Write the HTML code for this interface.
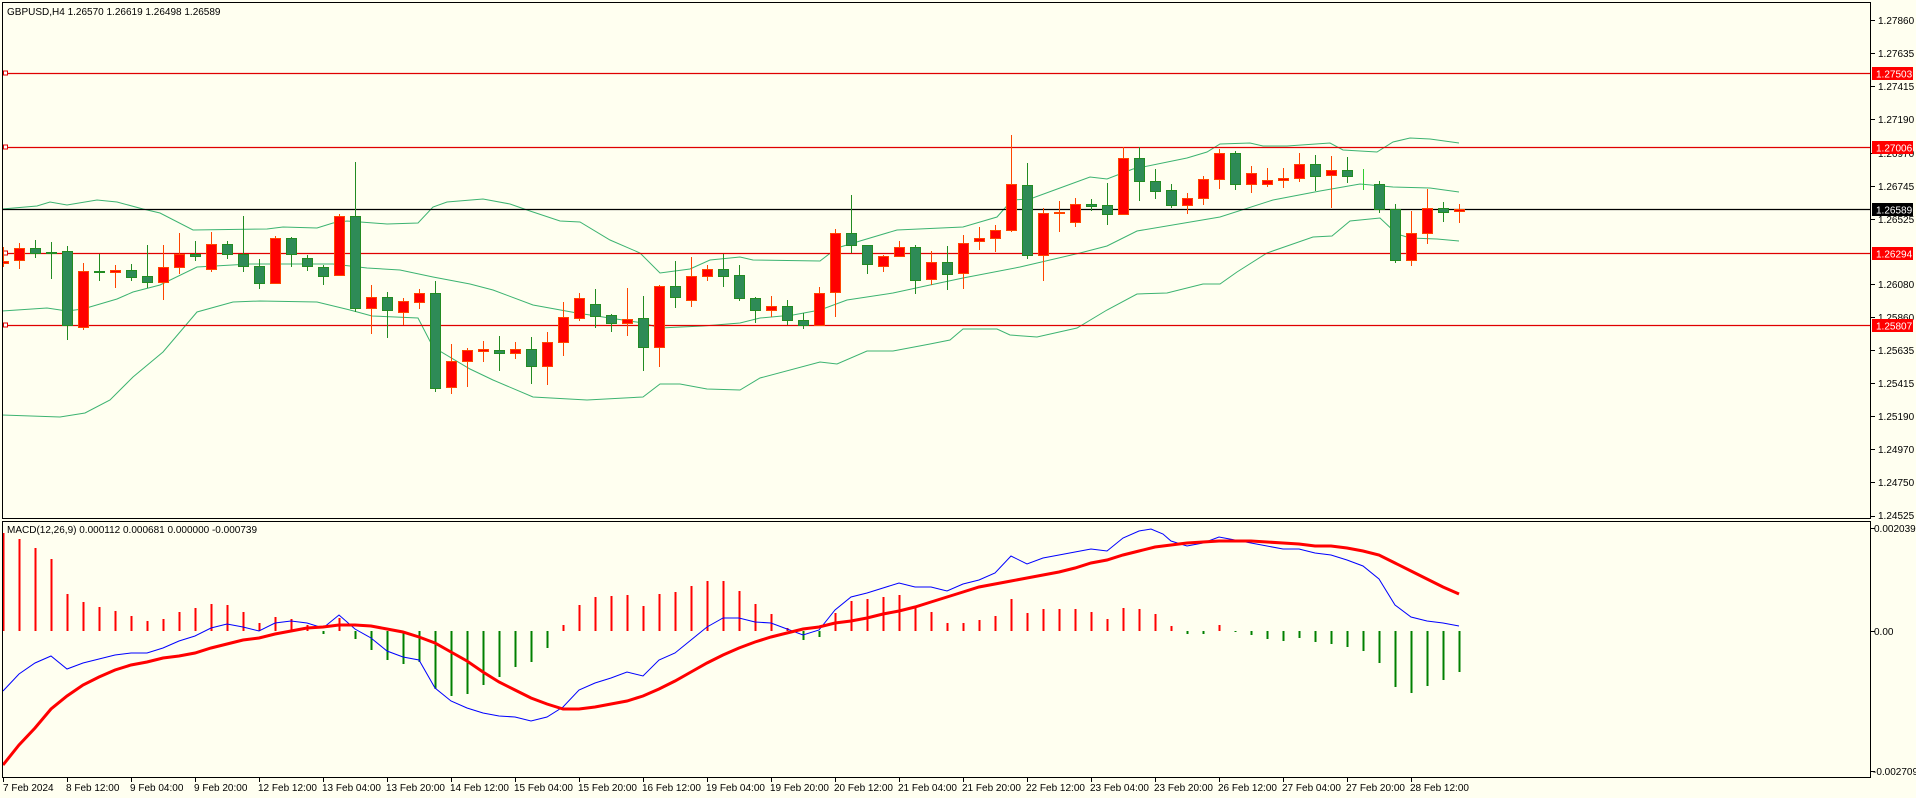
<!DOCTYPE html>
<html><head><meta charset="utf-8"><style>
html,body{margin:0;padding:0;background:#fffff0;}
svg{display:block;font-family:"Liberation Sans",sans-serif;}
.g path,.g rect{stroke:#228b22;fill:#2e8b57}
.r path,.r rect{stroke:#ff4500;fill:#ff0000}
text{font-size:10px;fill:#000}
</style></head><body>
<svg width="1916" height="798" viewBox="0 0 1916 798" xmlns="http://www.w3.org/2000/svg">
<rect x="0" y="0" width="1916" height="798" fill="#fffff0"/>
<defs><clipPath id="cm"><rect x="2" y="2" width="1868" height="516"/></clipPath>
<clipPath id="cd"><rect x="2" y="521" width="1868" height="256"/></clipPath></defs>

<g clip-path="url(#cm)">
<!-- bollinger -->
<g fill="none" stroke="#3cb371" stroke-width="1">
<polyline points="2,209 37,206 50,202 67,205 97,200 117,202 143,209 160,213 193,230 267,229 283,227 317,228 333,223 347,221 387,224 418,223 433,207 447,202 483,199 510,204 530,211 560,221 580,222 610,240 640,253 660,273 690,269 710,260 740,257 753,260 820,261 837,248 860,241 897,230 963,227 997,217 1012,200 1030,199 1060,188 1090,177 1107,179 1133,169 1187,158 1207,152 1220,144 1250,143 1263,146 1287,146 1330,143 1343,150 1377,152 1393,142 1410,138 1430,139 1459,143"/>
<polyline points="2,311 47,308 67,311 83,309 117,299 133,292 160,285 197,267 250,264 333,264 367,268 400,270 433,277 470,284 493,290 533,305 577,313 603,317 643,323 660,328 703,326 740,323 760,318 793,315 820,310 847,300 893,293 930,285 963,278 1020,267 1080,253 1107,246 1137,231 1220,217 1273,200 1320,191 1360,184 1393,187 1430,188 1459,192"/>
<polyline points="2,415 60,417 85,413 110,400 133,377 163,352 197,312 233,302 260,301 317,302 350,310 372,316 418,318 433,347 470,369 493,380 533,397 587,400 643,397 660,384 680,384 707,389 740,390 760,378 820,362 837,364 867,351 893,351 930,344 950,340 963,329 997,329 1010,335 1037,337 1077,328 1107,310 1137,294 1167,293 1203,284 1220,284 1237,272 1267,253 1313,237 1332,236 1350,221 1380,218 1397,234 1410,238 1437,239 1459,241"/>
</g>
<!-- horizontal lines -->
<g stroke="#e00000" stroke-width="1.2">
<line x1="2" y1="73.5" x2="1870" y2="73.5"/>
<line x1="2" y1="147.5" x2="1870" y2="147.5"/>
<line x1="2" y1="253.5" x2="1870" y2="253.5"/>
<line x1="2" y1="325.5" x2="1870" y2="325.5"/>
</g>
<line x1="2" y1="209.5" x2="1870" y2="209.5" stroke="#000" stroke-width="1.2"/>
<g fill="#fff" stroke="#e00000"><rect x="3.5" y="71" width="4" height="4"/><rect x="3.5" y="145" width="4" height="4"/><rect x="3.5" y="251" width="4" height="4"/><rect x="3.5" y="323" width="4" height="4"/></g>

<!-- green candles -->
<g class="g" stroke-width="1">
<path d="M35.5 240V258"/><rect x="30.5" y="248.5" width="10" height="5"/>
<path d="M51.5 242V279"/><rect x="46.5" y="252.5" width="10" height="1"/>
<path d="M67.5 246V340"/><rect x="62.5" y="251.5" width="10" height="74"/>
<path d="M99.5 254V281"/><rect x="94.5" y="271.5" width="10" height="1"/>
<path d="M131.5 264V281"/><rect x="126.5" y="270.5" width="10" height="7"/>
<path d="M147.5 245V288"/><rect x="142.5" y="276.5" width="10" height="6"/>
<path d="M195.5 241V261"/><rect x="190.5" y="254.5" width="10" height="2"/>
<path d="M227.5 241V259"/><rect x="222.5" y="244.5" width="10" height="10"/>
<path d="M243.5 216V272"/><rect x="238.5" y="254.5" width="10" height="12"/>
<path d="M259.5 259V289"/><rect x="254.5" y="266.5" width="10" height="17"/>
<path d="M291.5 237V267"/><rect x="286.5" y="238.5" width="10" height="16"/>
<path d="M307.5 255V271"/><rect x="302.5" y="258.5" width="10" height="8"/>
<path d="M323.5 265V285"/><rect x="318.5" y="267.5" width="10" height="9"/>
<path d="M355.5 162V312"/><rect x="350.5" y="216.5" width="10" height="92"/>
<path d="M387.5 292V338"/><rect x="382.5" y="297.5" width="10" height="13"/>
<path d="M435.5 281V392"/><rect x="430.5" y="293.5" width="10" height="95"/>
<path d="M499.5 336V371"/><rect x="494.5" y="350.5" width="10" height="3"/>
<path d="M531.5 337V384"/><rect x="526.5" y="349.5" width="10" height="17"/>
<path d="M595.5 289V328"/><rect x="590.5" y="304.5" width="10" height="12"/>
<path d="M611.5 314V332"/><rect x="606.5" y="315.5" width="10" height="8"/>
<path d="M643.5 296V371"/><rect x="638.5" y="318.5" width="10" height="29"/>
<path d="M675.5 261V308"/><rect x="670.5" y="286.5" width="10" height="11"/>
<path d="M723.5 254V287"/><rect x="718.5" y="269.5" width="10" height="7"/>
<path d="M739.5 265V301"/><rect x="734.5" y="275.5" width="10" height="23"/>
<path d="M755.5 297V323"/><rect x="750.5" y="298.5" width="10" height="12"/>
<path d="M787.5 300V325"/><rect x="782.5" y="306.5" width="10" height="14"/>
<path d="M803.5 313V329"/><rect x="798.5" y="320.5" width="10" height="5"/>
<path d="M851.5 195V253"/><rect x="846.5" y="233.5" width="10" height="12"/>
<path d="M867.5 245V274"/><rect x="862.5" y="245.5" width="10" height="19"/>
<path d="M915.5 245V294"/><rect x="910.5" y="247.5" width="10" height="33"/>
<path d="M947.5 246V290"/><rect x="942.5" y="262.5" width="10" height="12"/>
<path d="M1027.5 163V259"/><rect x="1022.5" y="185.5" width="10" height="70"/>
<path d="M1091.5 199V211"/><rect x="1086.5" y="204.5" width="10" height="2"/>
<path d="M1107.5 183V225"/><rect x="1102.5" y="205.5" width="10" height="9"/>
<path d="M1139.5 147V201"/><rect x="1134.5" y="158.5" width="10" height="23"/>
<path d="M1155.5 169V199"/><rect x="1150.5" y="181.5" width="10" height="10"/>
<path d="M1171.5 184V208"/><rect x="1166.5" y="190.5" width="10" height="15"/>
<path d="M1235.5 151V190"/><rect x="1230.5" y="153.5" width="10" height="31"/>
<path d="M1315.5 155V191"/><rect x="1310.5" y="164.5" width="10" height="12"/>
<path d="M1347.5 157V183"/><rect x="1342.5" y="170.5" width="10" height="6"/>
<path d="M1379.5 181V213"/><rect x="1374.5" y="184.5" width="10" height="25"/>
<path d="M1395.5 204V263"/><rect x="1390.5" y="209.5" width="10" height="51"/>
<path d="M1443.5 202V222"/><rect x="1438.5" y="208.5" width="10" height="4"/>
</g>
<path d="M1363.5 169V190" stroke="#32cd32" stroke-width="1"/>
<!-- red candles -->
<g class="r" stroke-width="1">
<path d="M3.5 247V267"/><rect x="-1.5" y="261.5" width="10" height="2"/>
<path d="M19.5 243V269"/><rect x="14.5" y="248.5" width="10" height="12"/>
<path d="M83.5 263V330"/><rect x="78.5" y="271.5" width="10" height="56"/>
<path d="M115.5 265V288"/><rect x="110.5" y="270.5" width="10" height="2"/>
<path d="M163.5 245V300"/><rect x="158.5" y="267.5" width="10" height="15"/>
<path d="M179.5 233V274"/><rect x="174.5" y="254.5" width="10" height="13"/>
<path d="M211.5 232V272"/><rect x="206.5" y="244.5" width="10" height="25"/>
<path d="M275.5 236V283"/><rect x="270.5" y="238.5" width="10" height="45"/>
<path d="M339.5 214V275"/><rect x="334.5" y="216.5" width="10" height="59"/>
<path d="M371.5 285V334"/><rect x="366.5" y="297.5" width="10" height="11"/>
<path d="M403.5 298V325"/><rect x="398.5" y="301.5" width="10" height="11"/>
<path d="M419.5 289V309"/><rect x="414.5" y="293.5" width="10" height="9"/>
<path d="M451.5 344V394"/><rect x="446.5" y="361.5" width="10" height="26"/>
<path d="M467.5 348V387"/><rect x="462.5" y="350.5" width="10" height="11"/>
<path d="M483.5 341V362"/><rect x="478.5" y="349.5" width="10" height="2"/>
<path d="M515.5 342V359"/><rect x="510.5" y="349.5" width="10" height="4"/>
<path d="M547.5 332V385"/><rect x="542.5" y="342.5" width="10" height="24"/>
<path d="M563.5 302V356"/><rect x="558.5" y="317.5" width="10" height="25"/>
<path d="M579.5 293V321"/><rect x="574.5" y="298.5" width="10" height="20"/>
<path d="M627.5 288V336"/><rect x="622.5" y="319.5" width="10" height="4"/>
<path d="M659.5 285V367"/><rect x="654.5" y="286.5" width="10" height="61"/>
<path d="M691.5 257V307"/><rect x="686.5" y="276.5" width="10" height="24"/>
<path d="M707.5 265V281"/><rect x="702.5" y="269.5" width="10" height="7"/>
<path d="M771.5 296V317"/><rect x="766.5" y="306.5" width="10" height="4"/>
<path d="M819.5 287V326"/><rect x="814.5" y="293.5" width="10" height="32"/>
<path d="M835.5 229V317"/><rect x="830.5" y="233.5" width="10" height="59"/>
<path d="M883.5 255V272"/><rect x="878.5" y="256.5" width="10" height="10"/>
<path d="M899.5 241V257"/><rect x="894.5" y="247.5" width="10" height="9"/>
<path d="M931.5 251V285"/><rect x="926.5" y="262.5" width="10" height="17"/>
<path d="M963.5 235V289"/><rect x="958.5" y="243.5" width="10" height="30"/>
<path d="M979.5 227V250"/><rect x="974.5" y="238.5" width="10" height="3"/>
<path d="M995.5 225V252"/><rect x="990.5" y="230.5" width="10" height="8"/>
<path d="M1011.5 135V232"/><rect x="1006.5" y="184.5" width="10" height="46"/>
<path d="M1043.5 208V281"/><rect x="1038.5" y="213.5" width="10" height="42"/>
<path d="M1059.5 201V232"/><rect x="1054.5" y="212.5" width="10" height="1"/>
<path d="M1075.5 198V227"/><rect x="1070.5" y="204.5" width="10" height="18"/>
<path d="M1123.5 147V214"/><rect x="1118.5" y="158.5" width="10" height="56"/>
<path d="M1187.5 193V214"/><rect x="1182.5" y="198.5" width="10" height="7"/>
<path d="M1203.5 176V205"/><rect x="1198.5" y="179.5" width="10" height="19"/>
<path d="M1219.5 149V189"/><rect x="1214.5" y="153.5" width="10" height="26"/>
<path d="M1251.5 166V193"/><rect x="1246.5" y="173.5" width="10" height="11"/>
<path d="M1267.5 168V187"/><rect x="1262.5" y="180.5" width="10" height="4"/>
<path d="M1283.5 168V188"/><rect x="1278.5" y="178.5" width="10" height="2"/>
<path d="M1299.5 153V182"/><rect x="1294.5" y="164.5" width="10" height="14"/>
<path d="M1331.5 156V208"/><rect x="1326.5" y="170.5" width="10" height="5"/>
<path d="M1411.5 211V266"/><rect x="1406.5" y="233.5" width="10" height="27"/>
<path d="M1427.5 189V244"/><rect x="1422.5" y="208.5" width="10" height="25"/>
<path d="M1459.5 204V223"/><rect x="1454.5" y="209.5" width="10" height="2"/>
</g>
</g>

<!-- main frame -->
<rect x="2.5" y="2.5" width="1868" height="516" fill="none" stroke="#000" stroke-width="1"/>
<text x="7" y="15">GBPUSD,H4  1.26570 1.26619 1.26498 1.26589</text>

<!-- price axis -->
<g stroke="#000" stroke-width="1">
<path d="M1871 20.5h4M1871 53.5h4M1871 86.5h4M1871 119.5h4M1871 153.5h4M1871 186.5h4M1871 219.5h4M1871 284.5h4M1871 317.5h4M1871 350.5h4M1871 383.5h4M1871 416.5h4M1871 449.5h4M1871 482.5h4M1871 516.5h4M1871 528.5h4M1871 631.5h4M1871 771.5h4"/>
</g>
<g>
<text x="1878" y="24">1.27860</text>
<text x="1878" y="57">1.27635</text>
<text x="1878" y="90">1.27415</text>
<text x="1878" y="123">1.27190</text>
<text x="1878" y="157">1.26970</text>
<text x="1878" y="190">1.26745</text>
<text x="1878" y="223">1.26525</text>
<text x="1878" y="288">1.26080</text>
<text x="1878" y="321">1.25860</text>
<text x="1878" y="354">1.25635</text>
<text x="1878" y="387">1.25415</text>
<text x="1878" y="420">1.25190</text>
<text x="1878" y="453">1.24970</text>
<text x="1878" y="486">1.24750</text>
<text x="1878" y="519">1.24525</text>
<text x="1874" y="532">0.002039</text>
<text x="1874" y="635">0.00</text>
<text x="1873" y="775">-0.002709</text>
</g>
<rect x="1872" y="67" width="41" height="13" fill="#ff0000"/><text x="1876" y="77.5" style="fill:#fff">1.27503</text>
<rect x="1872" y="141" width="41" height="13" fill="#ff0000"/><text x="1876" y="151.5" style="fill:#fff">1.27006</text>
<rect x="1872" y="203" width="41" height="13" fill="#000"/><text x="1876" y="213.5" style="fill:#fff">1.26589</text>
<rect x="1872" y="247" width="41" height="13" fill="#ff0000"/><text x="1876" y="257.5" style="fill:#fff">1.26294</text>
<rect x="1872" y="319" width="41" height="13" fill="#ff0000"/><text x="1876" y="329.5" style="fill:#fff">1.25807</text>

<!-- MACD -->
<g clip-path="url(#cd)">
<path stroke="#ff0000" stroke-width="2" d="M3.5 631V533M19.5 631V539M35.5 631V548M51.5 631V559M67.5 631V594M83.5 631V602M99.5 631V607M115.5 631V611M131.5 631V616M147.5 631V621M163.5 631V619M179.5 631V612M195.5 631V608M211.5 631V604M227.5 631V605M243.5 631V612M259.5 631V623M275.5 631V617M291.5 631V619M307.5 631V625M339.5 631V618M563.5 631V625M579.5 631V605M595.5 631V597M611.5 631V596M627.5 631V595M643.5 631V606M659.5 631V594M675.5 631V592M691.5 631V586M707.5 631V581M723.5 631V581M739.5 631V591M755.5 631V604M771.5 631V614M787.5 631V628M835.5 631V613M851.5 631V601M867.5 631V599M883.5 631V597M899.5 631V595M915.5 631V606M931.5 631V612M947.5 631V623M963.5 631V623M979.5 631V620M995.5 631V616M1011.5 631V599M1027.5 631V613M1043.5 631V609M1059.5 631V609M1075.5 631V609M1091.5 631V612M1107.5 631V619M1123.5 631V608M1139.5 631V609M1155.5 631V614M1171.5 631V626M1219.5 631V625"/>
<path stroke="#008000" stroke-width="2" d="M323.5 631V634M355.5 631V639M371.5 631V650M387.5 631V660M403.5 631V664M419.5 631V662M435.5 631V689M451.5 631V696M467.5 631V694M483.5 631V685M499.5 631V677M515.5 631V667M531.5 631V662M547.5 631V648M803.5 631V640M819.5 631V637M1187.5 631V634M1203.5 631V634M1235.5 631V632M1251.5 631V635M1267.5 631V639M1283.5 631V641M1299.5 631V638M1315.5 631V642M1331.5 631V644M1347.5 631V647M1363.5 631V651M1379.5 631V663M1395.5 631V687M1411.5 631V693M1427.5 631V686M1443.5 631V680M1459.5 631V672"/>
<polyline fill="none" stroke="#0000ff" stroke-width="1" points="3,691 19,674 35,663 51,656 67,669 83,663 99,659 115,655 131,653 147,653 163,648 179,641 195,636 211,628 227,624 243,627 259,631 275,623 291,621 307,623 323,628 339,615 355,629 371,638 387,651 403,657 419,660 435,688 451,701 467,708 483,713 499,716 515,717 531,721 547,717 563,707 579,690 595,683 611,678 627,672 643,676 659,660 675,653 691,640 707,627 723,618 739,618 755,622 771,623 787,629 803,635 819,630 835,610 851,597 867,593 883,588 899,583 915,587 931,587 947,591 963,584 979,580 995,573 1011,556 1027,564 1043,558 1059,555 1075,552 1091,549 1107,551 1123,538 1139,531 1151,529 1163,534 1171,541 1187,546 1203,543 1219,537 1235,540 1251,543 1283,549 1299,549 1315,553 1331,555 1347,560 1363,566 1379,579 1395,605 1411,617 1427,621 1443,623 1459,626"/>
<polyline fill="none" stroke="#ff0000" stroke-width="3" points="3,765 19,745 35,728 51,709 67,696 83,685 99,677 115,670 131,665 147,662 163,658 179,656 195,653 211,648 227,644 243,640 259,638 275,634 291,631 307,628 323,627 339,625 355,625 371,626 387,629 403,632 419,637 435,643 451,652 467,661 483,672 499,682 515,690 531,698 547,704 563,709 579,709 595,707 611,704 627,701 643,696 659,689 675,681 691,672 707,663 723,655 739,648 755,642 771,637 787,633 803,629 819,627 835,623 851,621 867,618 883,614 899,611 915,607 931,602 947,597 963,592 979,587 995,584 1011,581 1027,578 1043,575 1059,572 1075,568 1091,563 1107,560 1123,555 1139,551 1155,547 1171,545 1187,543 1203,542 1219,541 1235,541 1251,541 1267,542 1283,543 1299,544 1315,546 1331,546 1347,548 1363,551 1379,555 1395,563 1411,571 1427,579 1443,587 1459,594"/>
</g>
<rect x="2.5" y="521.5" width="1868" height="256" fill="none" stroke="#000" stroke-width="1"/>
<text x="7" y="533">MACD(12,26,9) 0.000112 0.000681 0.000000 -0.000739</text>

<!-- time axis -->
<path stroke="#000" stroke-width="1" d="M3.5 778v4M67.5 778v4M131.5 778v4M195.5 778v4M259.5 778v4M323.5 778v4M387.5 778v4M451.5 778v4M515.5 778v4M579.5 778v4M643.5 778v4M707.5 778v4M771.5 778v4M835.5 778v4M899.5 778v4M963.5 778v4M1027.5 778v4M1091.5 778v4M1155.5 778v4M1219.5 778v4M1283.5 778v4M1347.5 778v4M1411.5 778v4"/>
<g>
<text x="3" y="791">7 Feb 2024</text>
<text x="66" y="791">8 Feb 12:00</text>
<text x="130" y="791">9 Feb 04:00</text>
<text x="194" y="791">9 Feb 20:00</text>
<text x="258" y="791">12 Feb 12:00</text>
<text x="322" y="791">13 Feb 04:00</text>
<text x="386" y="791">13 Feb 20:00</text>
<text x="450" y="791">14 Feb 12:00</text>
<text x="514" y="791">15 Feb 04:00</text>
<text x="578" y="791">15 Feb 20:00</text>
<text x="642" y="791">16 Feb 12:00</text>
<text x="706" y="791">19 Feb 04:00</text>
<text x="770" y="791">19 Feb 20:00</text>
<text x="834" y="791">20 Feb 12:00</text>
<text x="898" y="791">21 Feb 04:00</text>
<text x="962" y="791">21 Feb 20:00</text>
<text x="1026" y="791">22 Feb 12:00</text>
<text x="1090" y="791">23 Feb 04:00</text>
<text x="1154" y="791">23 Feb 20:00</text>
<text x="1218" y="791">26 Feb 12:00</text>
<text x="1282" y="791">27 Feb 04:00</text>
<text x="1346" y="791">27 Feb 20:00</text>
<text x="1410" y="791">28 Feb 12:00</text>
</g>
</svg>
</body></html>
